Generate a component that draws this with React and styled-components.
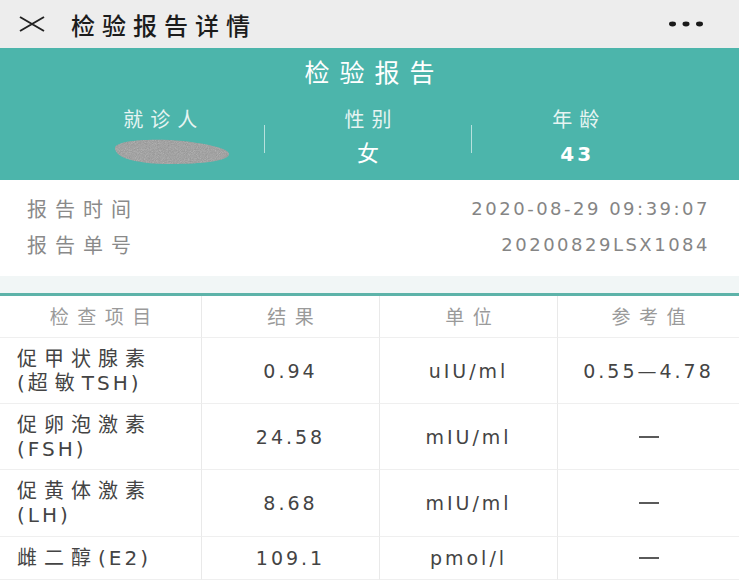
import React from 'react'
import styled, { createGlobalStyle } from 'styled-components'

const GlobalStyle = createGlobalStyle`
  html, body {
    margin: 0;
    padding: 0;
    background: #ffffff;
  }
  body {
    font-family: "DejaVu Sans", "Noto Sans CJK SC", sans-serif;
    -webkit-font-smoothing: antialiased;
  }
`

const Page = styled.div`
  width: 739px;
  min-height: 581px;
  display: flex;
  flex-flow: column nowrap;
  background: #fff;
`

/* Top bar */
const TopBar = styled.div`
  height: 48px;
  display: flex;
  align-items: center;
  padding: 0 36px 0 19px;
  background: #ededed;
`

const TopTitle = styled.div`
  flex: 1;
  margin-left: 26px;
  font-size: 24px;
  font-weight: 500;
  letter-spacing: 7px;
  color: #1c1c1c;
`

/* Teal banner */
const Banner = styled.div`
  display: flex;
  flex-flow: column nowrap;
  padding: 8px 0 10px 0;
  background: #4cb5ab;
  color: #fff;
`

const BannerTitle = styled.div`
  height: 36px;
  line-height: 36px;
  text-align: center;
  font-size: 25px;
  letter-spacing: 10px;
  margin-right: -10px;
`

const PatientRow = styled.div`
  display: grid;
  grid-template-columns: 1fr 1px 1fr 1px 1fr;
  margin-top: 14px;
  padding: 0 60px 0 57px;
`

const PatientCell = styled.div`
  display: flex;
  flex-flow: column nowrap;
  align-items: center;
`

const PatientLabel = styled.div`
  height: 28px;
  line-height: 28px;
  font-size: 20px;
  letter-spacing: 7px;
  margin-right: -7px;
  color: #e6f4f2;
`

const PatientValue = styled.div`
  height: 32px;
  line-height: 32px;
  margin-top: 4px;
  font-size: ${props => (props.cjk ? '22px' : '20px')};
  font-weight: ${props => (props.cjk ? 400 : 600)};
  letter-spacing: 3px;
  margin-right: -3px;
  color: #fff;
`

const Divider = styled.div`
  align-self: center;
  width: 1px;
  height: 28px;
  margin-top: 2px;
  background: rgba(255, 255, 255, 0.6);
`

const Blur = styled.svg`
  display: block;
  margin: 3px 0 0 24px;
`

/* Report meta */
const Meta = styled.div`
  display: flex;
  flex-flow: column nowrap;
  padding: 10px 29px 14px 27px;
`

const MetaRow = styled.div`
  height: 36px;
  display: flex;
  align-items: center;
  justify-content: space-between;
  color: #8a8a8a;
`

const MetaLabel = styled.span`
  font-size: 20px;
  letter-spacing: 8px;
`

const MetaValue = styled.span`
  font-size: 18px;
  letter-spacing: 2.5px;
  color: #858585;
`

const Strip = styled.div`
  height: 17px;
  background: #f1f6f6;
  border-bottom: 3px solid #5db3a9;
`

/* Result table */
const Table = styled.div`
  display: grid;
  grid-template-columns: 201px 178px 178px 1fr;
`

const Cell = styled.div`
  display: flex;
  align-items: center;
  justify-content: ${props => (props.left ? 'flex-start' : 'center')};
  height: ${props => props.h}px;
  padding-left: ${props => (props.left ? '17px' : '0')};
  box-sizing: border-box;
  border-bottom: 1px solid #efefef;
  border-left: ${props => (props.first ? 'none' : '1px solid #e9e9e9')};
  font-size: ${props => (props.left || props.head ? '20px' : '19px')};
  line-height: 24px;
  letter-spacing: 3px;
  color: ${props => (props.head ? '#9a9a9a' : '#444')};
  text-align: ${props => (props.left ? 'left' : 'center')};
`

const HeadText = styled.span`
  font-size: 19px;
  letter-spacing: 8.5px;
  margin-right: -8.5px;
`

const Han = styled.span`
  letter-spacing: 7px;
`

const Dash = styled.span`
  display: inline-block;
  width: 20px;
  height: 2px;
  background: #5a5a5a;
`

const CloseIcon = () => (
  <svg width="26" height="16" viewBox="0 0 26 16">
    <path d="M1 1 L25 15 M25 1 L1 15" stroke="#222" strokeWidth="2" fill="none" />
  </svg>
)

const MoreIcon = () => (
  <svg width="34" height="6" viewBox="0 0 34 6">
    <ellipse cx="3.5" cy="3" rx="3.5" ry="2.4" fill="#1a1a1a" />
    <ellipse cx="17" cy="3" rx="3.5" ry="2.4" fill="#1a1a1a" />
    <ellipse cx="30.5" cy="3" rx="3.5" ry="2.4" fill="#1a1a1a" />
  </svg>
)

const BlurredName = () => (
  <Blur width="118" height="28" viewBox="0 0 118 28">
    <defs>
      <filter id="grain">
        <feTurbulence type="fractalNoise" baseFrequency="1.1" numOctaves="2" result="t" />
        <feColorMatrix in="t" type="saturate" values="0" result="g" />
        <feComposite in="g" in2="SourceGraphic" operator="in" />
      </filter>
    </defs>
    <path d="M2 11 C2 3 40 1 70 4 C96 7 116 12 116 17 C116 24 88 27 58 27 C24 27 2 21 2 11 Z" fill="#9a9a9a" />
    <path d="M2 11 C2 3 40 1 70 4 C96 7 116 12 116 17 C116 24 88 27 58 27 C24 27 2 21 2 11 Z" fill="#888" filter="url(#grain)" opacity="0.55" />
  </Blur>
)

// Han characters get wider tracking than latin ones in the item names
const Mixed = ({ text }) =>
  text.split(/([\u4e00-\u9fff]+)/).filter(Boolean).map((part, i) =>
    /[\u4e00-\u9fff]/.test(part) ? <Han key={i}>{part}</Han> : <span key={i}>{part}</span>
  )

const rows = [
  { name: ['促甲状腺素', '(超敏TSH)'], result: '0.94', unit: 'uIU/ml', ref: '0.55—4.78', h: 66 },
  { name: ['促卵泡激素', '(FSH)'], result: '24.58', unit: 'mIU/ml', ref: null, h: 66 },
  { name: ['促黄体激素', '(LH)'], result: '8.68', unit: 'mIU/ml', ref: null, h: 67 },
  { name: ['雌二醇(E2)'], result: '109.1', unit: 'pmol/l', ref: null, h: 43 },
]

const heads = ['检查项目', '结果', '单位', '参考值']

const App = () => {
  return (
    <Page>
      <GlobalStyle />
      <TopBar>
        <CloseIcon />
        <TopTitle>检验报告详情</TopTitle>
        <MoreIcon />
      </TopBar>

      <Banner>
        <BannerTitle>检验报告</BannerTitle>
        <PatientRow>
          <PatientCell>
            <PatientLabel>就诊人</PatientLabel>
            <BlurredName />
          </PatientCell>
          <Divider />
          <PatientCell>
            <PatientLabel>性别</PatientLabel>
            <PatientValue cjk>女</PatientValue>
          </PatientCell>
          <Divider />
          <PatientCell>
            <PatientLabel>年龄</PatientLabel>
            <PatientValue>43</PatientValue>
          </PatientCell>
        </PatientRow>
      </Banner>

      <Meta>
        <MetaRow>
          <MetaLabel>报告时间</MetaLabel>
          <MetaValue>2020-08-29 09:39:07</MetaValue>
        </MetaRow>
        <MetaRow>
          <MetaLabel>报告单号</MetaLabel>
          <MetaValue>20200829LSX1084</MetaValue>
        </MetaRow>
      </Meta>

      <Strip />

      <Table>
        {heads.map((text, i) => (
          <Cell key={text} h={42} head first={i === 0}>
            <HeadText>{text}</HeadText>
          </Cell>
        ))}
        {rows.map(row => (
          <React.Fragment key={row.result}>
            <Cell h={row.h} left first>
              <div>
                {row.name.map(line => (
                  <div key={line}>
                    <Mixed text={line} />
                  </div>
                ))}
              </div>
            </Cell>
            <Cell h={row.h}>{row.result}</Cell>
            <Cell h={row.h}>{row.unit}</Cell>
            <Cell h={row.h}>{row.ref ? row.ref : <Dash />}</Cell>
          </React.Fragment>
        ))}
      </Table>
    </Page>
  )
}

export default App
